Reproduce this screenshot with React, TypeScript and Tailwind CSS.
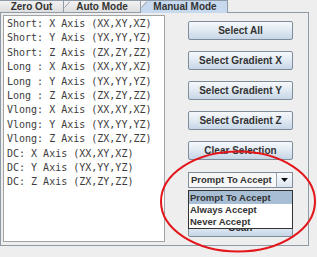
const ITEMS = [
  'Short: X Axis (XX,XY,XZ)',
  'Short: Y Axis (YX,YY,YZ)',
  'Short: Z Axis (ZX,ZY,ZZ)',
  'Long : X Axis (XX,XY,XZ)',
  'Long : Y Axis (YX,YY,YZ)',
  'Long : Z Axis (ZX,ZY,ZZ)',
  'Vlong: X Axis (XX,XY,XZ)',
  'Vlong: Y Axis (YX,YY,YZ)',
  'Vlong: Z Axis (ZX,ZY,ZZ)',
  'DC: X Axis (XX,XY,XZ)',
  'DC: Y Axis (YX,YY,YZ)',
  'DC: Z Axis (ZX,ZY,ZZ)',
]

const BUTTONS = ['Select All', 'Select Gradient X', 'Select Gradient Y', 'Select Gradient Z', 'Clear Selection']

function Slant({ fill }: { fill: string }) {
  // cut top-left corner of a Metal tab
  return (
    <svg className="absolute left-0 top-0" width="6" height="7" viewBox="0 0 6 7">
      <polygon points="0,0 6,0 0,7" fill={fill} />
      <line x1="0.5" y1="6.5" x2="6" y2="0.5" stroke="#8e9aa6" strokeWidth="1" />
    </svg>
  )
}

function Button({ label }: { label: string }) {
  return (
    <div className="w-[105px] h-[19px] shrink-0 border border-[#7f8d9b] rounded-[2px] bg-linear-to-b from-[#f6f9fc] via-[#e0e9f2] to-[#c6d6e7] flex items-center justify-center text-[10px] font-bold text-[#333]">
      {label}
    </div>
  )
}

export default function App() {
  return (
    <div className="relative w-[317px] h-[257px] bg-[#eeeeee] overflow-hidden font-['Liberation_Sans',sans-serif] text-[#333]">
      {/* tab strip */}
      <div className="flex h-[13px] w-[309px] text-[10px] font-bold leading-none">
        <div className="w-[64px] border-t border-r border-b border-[#8e9aa6] bg-linear-to-b from-[#f2f2f2] to-[#dedede] flex items-center justify-center">
          Zero Out
        </div>
        <div className="relative w-[77px] border-t border-r border-b border-[#8e9aa6] bg-linear-to-b from-[#f2f2f2] to-[#dedede] flex items-center justify-center">
          <Slant fill="#eeeeee" />
          Auto Mode
        </div>
        <div className="relative w-[87px] border-t border-r border-[#8e9aa6] bg-[#c6d9ef] flex items-center justify-center pl-[2px]">
          <Slant fill="#eeeeee" />
          Manual Mode
        </div>
        <div className="flex-1 border-b border-[#8e9aa6]" />
      </div>

      {/* tab content */}
      <div className="w-[309px] h-[233px] border-l border-r border-b border-[#8e9aa6] flex pl-[2px] pt-[2px]">
        <div className="w-[162px] h-[227px] border border-[#a3a3a3] bg-white pl-[3px] pt-[1px] font-['DejaVu_Sans_Mono',monospace] text-[10px] leading-[14.4px] text-[#3c3c3c] whitespace-pre">
          {ITEMS.map(t => (
            <div key={t}>{t}</div>
          ))}
        </div>

        <div className="ml-[23px] mt-[6px] flex flex-col gap-[11px]">
          {BUTTONS.map(b => <Button key={b} label={b} />)}
          <div className="mt-[1px] w-[105px] h-[16px] flex border border-[#7f8d9b] bg-[#f7f7f7] text-[9.5px] font-bold">
            <div className="flex-1 flex items-center pl-[2px]">Prompt To Accept</div>
            <div className="w-[16px] border-l border-[#9aa6b2] bg-linear-to-b from-[#fbfcfe] to-[#dbe5ef] flex items-center justify-center">
              <svg width="7" height="4" viewBox="0 0 7 4"><polygon points="0,0 7,0 3.5,4" fill="#111" /></svg>
            </div>
          </div>
          <div className="mt-[19px]">
            <Button label="Scan" />
          </div>
        </div>
      </div>

      {/* open combo popup */}
      <div className="absolute left-[188px] top-[190px] w-[105px] h-[39px] border border-[#333] bg-white text-[9.5px] font-bold leading-[12px]">
        <div className="h-[13px] pl-[1px] pt-[1px] bg-[#a8bed4]">Prompt To Accept</div>
        <div className="h-[12px] pl-[1px]">Always Accept</div>
        <div className="h-[12px] pl-[1px]">Never Accept</div>
      </div>

      {/* annotation */}
      <svg className="absolute left-0 top-0 pointer-events-none" width="317" height="257">
        <ellipse cx="238" cy="201.5" rx="77" ry="50" fill="none" stroke="#e3161b" strokeWidth="2" />
      </svg>
    </div>
  )
}
